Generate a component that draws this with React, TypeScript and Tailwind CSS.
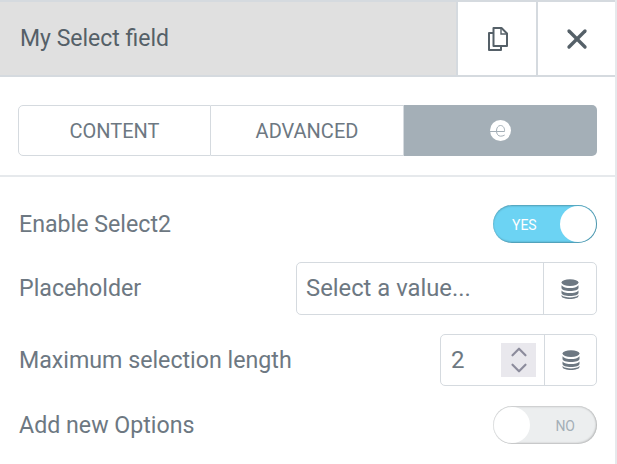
import { X, ChevronUp, ChevronDown } from 'lucide-react';

function DbIcon() {
  return (
    <svg width="18" height="20" viewBox="0 0 18 20" fill="#6d7882">
      <ellipse cx="9" cy="3.6" rx="8.5" ry="3.4" />
      <path d="M.5 6.200C2 8.200 5.500 9 9 9s7-.8 8.500-2.800V9c0 1.700-3.800 3-8.500 3S.5 10.700.5 9z" />
      <path d="M.5 11.400C2 13.300 5.500 14 9 14s7-.7 8.500-2.600V14c0 1.700-3.800 3-8.500 3S.5 15.700.5 14z" />
      <path d="M.5 16C2 17.800 5.500 18.400 9 18.400s7-.6 8.500-2.400v1c0 1.600-3.800 3-8.500 3S.5 18.600.5 17z" />
    </svg>
  );
}

function CopyIcon() {
  return (
    <svg className="ml-[2px]" width="20" height="24" viewBox="0 0 20 24" fill="none" stroke="#556068" strokeWidth="2">
      <path d="M5 6H1v17h12v-4" strokeLinejoin="round" />
      <path d="M5.500 1h8L19 6.500V19H5.500z" strokeLinejoin="round" />
      <path d="M13 1v6h6" strokeWidth="1.400" />
    </svg>
  );
}

function ElementorMark() {
  return (
    <svg className="-ml-[1px]" width="21" height="21" viewBox="0 0 21 21">
      <circle cx="10.500" cy="10.500" r="10.500" fill="#fff" />
      <path
        d="M0 11.500H14.500c.4-3.200-1.200-6-4-6-2.600 0-4 2.500-4 5.500 0 3 1.600 5.200 4.200 5.200 1.600 0 3-.5 4-1.200"
        fill="none"
        stroke="#a4afb7"
        strokeWidth="1"
      />
    </svg>
  );
}

export default function App() {
  return (
    <div className="w-[617px] h-[464px] overflow-hidden bg-white border-r-2 border-[#e6e9ec] font-['Roboto',sans-serif] text-[#6d7882]">
      {/* Header */}
      <div className="h-[77px] flex bg-[#e0e0e0] border-y-2 border-[#d5dadf]">
        <div className="flex-1 flex items-center pl-[20px] pt-[2px] text-[23px] text-[#556068]">My Select field</div>
        <button className="w-[80px] bg-white border-l-2 border-[#d5dadf] flex items-center justify-center">
          <CopyIcon />
        </button>
        <button className="w-[79px] bg-white border-l-2 border-[#d5dadf] flex items-center justify-center">
          <X className="w-[32px] h-[32px] text-[#556068]" strokeWidth={2.5} />
        </button>
      </div>

      {/* Tabs */}
      <div className="h-[100px] px-[18px] pt-[28px] border-b-2 border-[#e6e9ec]">
        <div className="flex h-[51px] text-[20px]">
          <div className="w-[193px] flex items-center justify-center border border-[#d5dadf] rounded-l-[5px]">CONTENT</div>
          <div className="w-[193px] flex items-center justify-center border-y border-r border-[#d5dadf]">ADVANCED</div>
          <div className="flex-1 flex items-center justify-center bg-[#a4afb7] rounded-r-[5px]">
            <ElementorMark />
          </div>
        </div>
      </div>

      {/* Controls */}
      <div className="pl-[19px] pr-[18px] pt-[28px] text-[23.2px]">
        <div className="flex items-center justify-between h-[38px]">
          <span>Enable Select2</span>
          <div className="relative w-[104px] h-[38px] rounded-full bg-[#6cd3f3] shadow-[inset_-1px_-1px_2px_rgba(0,0,0,0.3),inset_0_1px_2px_rgba(0,0,0,0.25)]">
            <span className="absolute left-[19px] top-[11px] text-[14px] leading-[18px] text-white">YES</span>
            <span className="absolute right-[1px] top-[1px] w-[36px] h-[36px] rounded-full bg-white" />
          </div>
        </div>

        <div className="flex items-center justify-between h-[53px] mt-[19px]">
          <span>Placeholder</span>
          <div className="w-[301px] h-[53px] flex border border-[#d5dadf] rounded-[5px]">
            <span className="flex-1 flex items-center pl-[9px] text-[23.8px]">Select a value...</span>
            <span className="w-[53px] flex items-center justify-center border-l border-[#d5dadf]">
              <DbIcon />
            </span>
          </div>
        </div>

        <div className="flex items-center justify-between h-[52px] mt-[19px]">
          <span>Maximum selection length</span>
          <div className="w-[157px] h-[52px] flex border border-[#d5dadf] rounded-[5px]">
            <span className="flex-1 flex items-center pl-[10px] relative text-[24px]">
              2
              <span className="absolute right-[8px] top-[8px] w-[35px] h-[34px] bg-[#e9e8ed] flex flex-col items-center justify-center text-[#8c8c9c]">
                <ChevronUp className="w-[26px] h-[26px] -my-[5px]" strokeWidth={2} />
                <ChevronDown className="w-[26px] h-[26px] -my-[5px]" strokeWidth={2} />
              </span>
            </span>
            <span className="w-[52px] flex items-center justify-center border-l border-[#d5dadf]">
              <DbIcon />
            </span>
          </div>
        </div>

        <div className="flex items-center justify-between h-[38px] mt-[20px]">
          <span>Add new Options</span>
          <div className="relative w-[104px] h-[38px] rounded-full bg-[#eceeef] shadow-[inset_-1px_-1px_2px_rgba(0,0,0,0.2),inset_0_1px_2px_rgba(0,0,0,0.15)]">
            <span className="absolute right-[22px] top-[11px] text-[14px] leading-[18px] text-[#a4afb7]">NO</span>
            <span className="absolute left-[1px] top-[1px] w-[36px] h-[36px] rounded-full bg-white" />
          </div>
        </div>
      </div>
    </div>
  );
}
